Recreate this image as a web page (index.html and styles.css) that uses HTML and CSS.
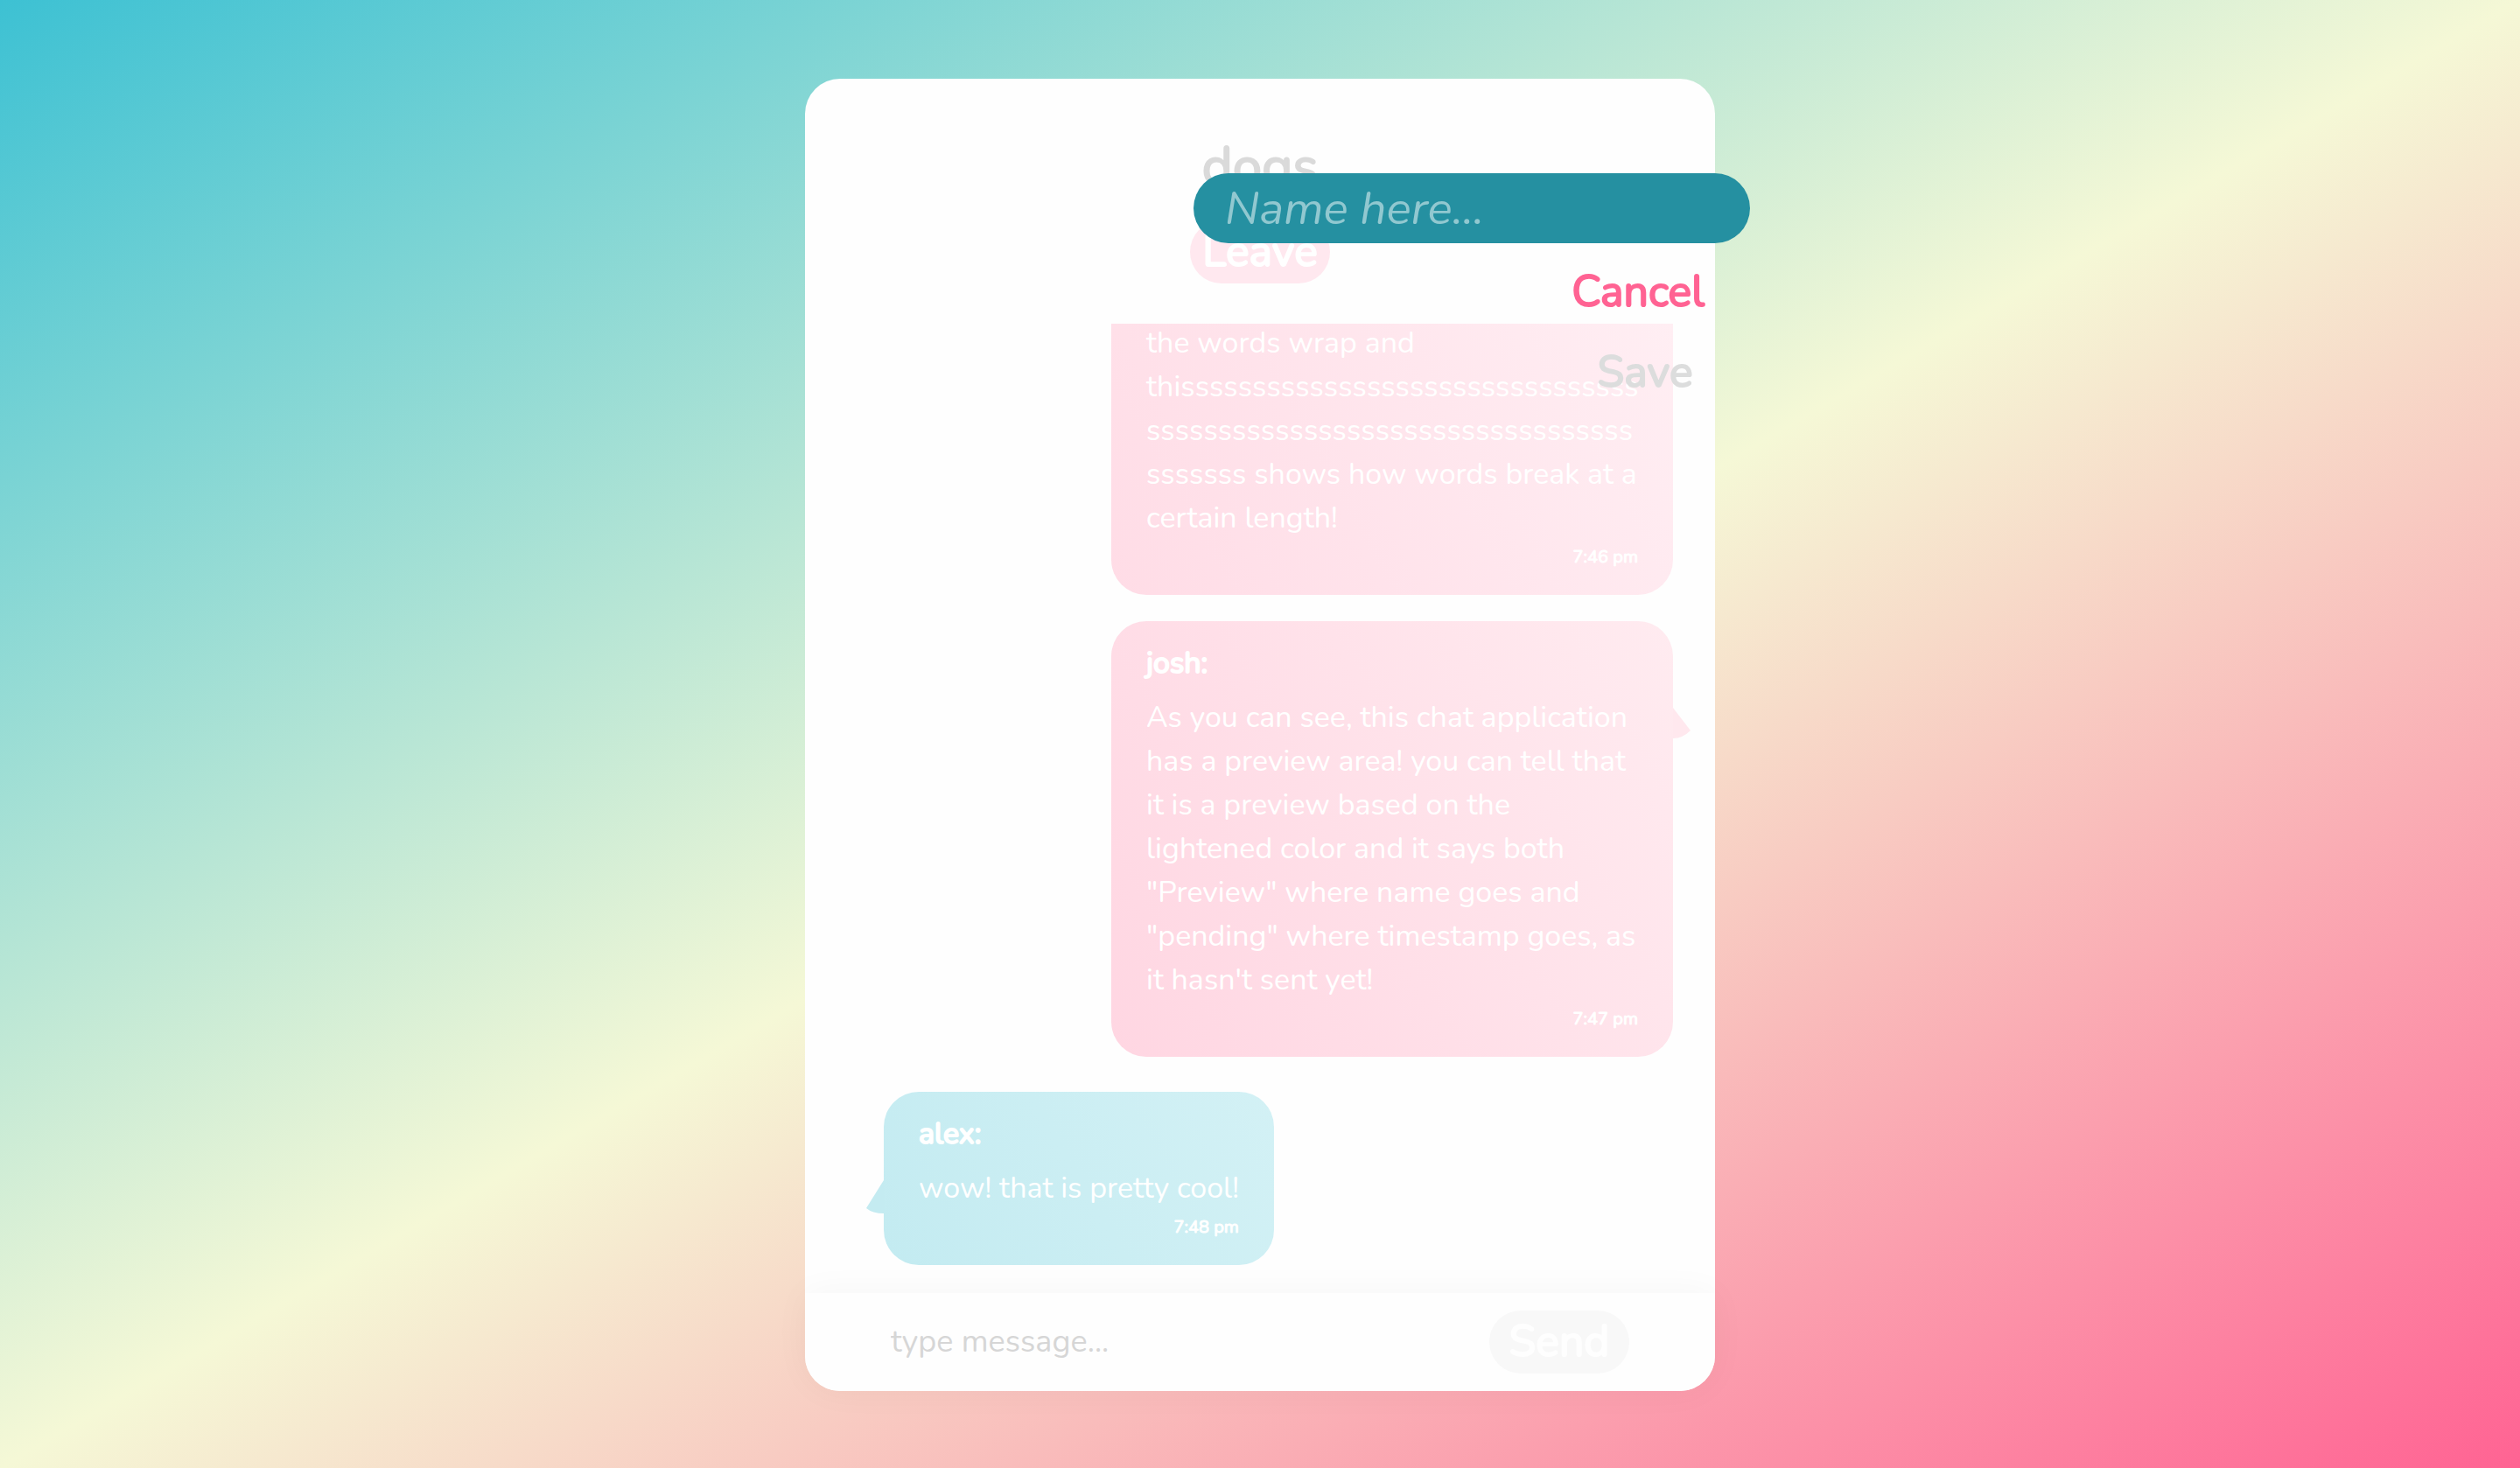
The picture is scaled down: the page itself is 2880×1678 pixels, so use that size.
FILE: index.html
```html
<!DOCTYPE html>
<html lang="en">
<head>
<meta charset="utf-8">
<title>dogs</title>
<link rel="stylesheet" href="styles.css">
</head>
<body>
<main class="card">
  <header class="room">
    <h1 class="room-name">dogs</h1>
    <button class="btn btn-leave" type="button">Leave</button>
  </header>
  <section class="messages">
    <article class="bubble mine continued">
      <p class="text">the words wrap and<br>thissssssssssssssssssssssssssssssss<br>ssssssssssssssssssssssssssssssssss<br>sssssss shows how words break at a<br>certain length!</p>
      <time class="time">7:46 pm</time>
    </article>
    <article class="bubble mine tail">
      <h2 class="author">josh:</h2>
      <p class="text">As you can see, this chat application<br>has a preview area! you can tell that<br>it is a preview based on the<br>lightened color and it says both<br>"Preview" where name goes and<br>"pending" where timestamp goes, as<br>it hasn't sent yet!</p>
      <time class="time">7:47 pm</time>
    </article>
    <article class="bubble theirs tail">
      <h2 class="author">alex:</h2>
      <p class="text">wow! that is pretty cool!</p>
      <time class="time">7:48 pm</time>
    </article>
  </section>
  <form class="composer">
    <input class="message-input" type="text" placeholder="type message..." aria-label="Message">
    <button class="btn btn-send" type="button">Send</button>
  </form>
  <form class="name-form">
    <input class="name-input" type="text" placeholder="Name here..." aria-label="Name">
    <div class="name-actions">
      <button class="btn btn-cancel" type="button">Cancel</button>
      <button class="btn btn-save" type="button">Save</button>
    </div>
  </form>
</main>
</body>
</html>
```
FILE: styles.css
```css
* {
  box-sizing: border-box;
}

body {
  margin: 0;
  min-height: 100vh;
  padding: 90px 20px 88px;
  font-family: Nunito, Lato, sans-serif;
  font-size: 34px;
  background: linear-gradient(to bottom right, #3dc1d3, #f5f8d6, #ff6393);
}

h1, h2, p {
  margin: 0;
}

button, input {
  border: 0;
  font-family: inherit;
}

.card {
  position: relative;
  display: flex;
  flex-direction: column;
  max-width: 1040px;
  height: calc(100vh - 178px);
  margin: 0 auto;
  border-radius: 40px;
  background: #fefefe;
}

.room {
  display: flex;
  flex-direction: column;
  align-items: center;
  gap: 22px;
  padding: 60px 40px 46px;
}

.room-name {
  font-size: 60px;
  line-height: 80px;
  font-weight: 400;
  -webkit-text-stroke: 2px currentColor;
  color: #dadada;
}

.btn {
  min-width: 160px;
  height: 72px;
  padding: 0 12px;
  border-radius: 36px;
  font-size: 50px;
  line-height: 72px;
  font-weight: 400;
  -webkit-text-stroke: 2px currentColor;
  background: none;
}

.btn-leave {
  background: #ffe8ef;
  color: #fff;
}

.messages {
  display: flex;
  flex: 1;
  flex-direction: column;
  align-items: flex-start;
  justify-content: flex-end;
  min-height: 0;
  padding: 0 48px 32px 90px;
  overflow: hidden;
}

.bubble {
  position: relative;
  display: flex;
  flex-direction: column;
  flex-shrink: 0;
  padding: 23px 40px;
  border-radius: 40px;
  color: #fff;
}

.mine {
  align-self: flex-end;
  width: 642px;
  margin-bottom: 40px;
  background: linear-gradient(60deg, #ffd6e2, #ffebf0);
}

.continued {
  margin-bottom: 30px;
  padding-top: 0;
  border-radius: 0 0 40px 40px;
  background: linear-gradient(60deg, #ffdce6, #ffeef3);
}

.theirs {
  background: linear-gradient(60deg, #c3ebf1, #d3f1f5);
}

.tail::after {
  content: "";
  position: absolute;
  top: 99px;
  width: 20px;
  height: 40px;
}

.mine.tail::after {
  left: 100%;
  background: #ffe8ee;
  clip-path: path("M0 0L20 26Q11 35 0 35Z");
}

.theirs.tail::after {
  right: 100%;
  background: #c4ebf1;
  clip-path: path("M20 2L0 34Q7 40 20 40Z");
}

.author {
  margin-bottom: 12px;
  font-size: 34px;
  line-height: 50px;
  font-weight: 400;
  -webkit-text-stroke: 2px currentColor;
}

.text {
  line-height: 50px;
  white-space: nowrap;
}

.time {
  align-self: flex-end;
  font-size: 20px;
  line-height: 40px;
  font-weight: 400;
  -webkit-text-stroke: 1px currentColor;
}

.composer {
  display: flex;
  align-items: center;
  justify-content: space-between;
  height: 112px;
  padding: 0 98px;
  border-radius: 0 0 40px 40px;
  background: #fefefe;
  box-shadow: 0 0 40px rgba(0, 0, 0, 0.04);
}

.message-input {
  flex: 1;
  min-width: 0;
  padding: 0;
  font-size: 36px;
  line-height: 50px;
  background: none;
}

.message-input::placeholder {
  color: #d6d6d6;
}

.btn-send {
  background: #f8f8f8;
  color: #fefefe;
}

.name-form {
  position: absolute;
  top: 108px;
  left: 444px;
  width: 636px;
}

.name-input {
  display: block;
  width: 100%;
  height: 80px;
  padding: 0 36px;
  border-radius: 40px;
  font-size: 53px;
  font-style: italic;
  background: #2590a1;
  color: #fff;
}

.name-input::placeholder {
  color: #91c8d0;
}

.name-actions {
  display: flex;
  flex-direction: column;
  align-items: flex-end;
  gap: 20px;
  padding: 20px 40px 0 0;
}

.btn-cancel {
  color: #ff6393;
}

.btn-save {
  color: #dcdddd;
}
```
